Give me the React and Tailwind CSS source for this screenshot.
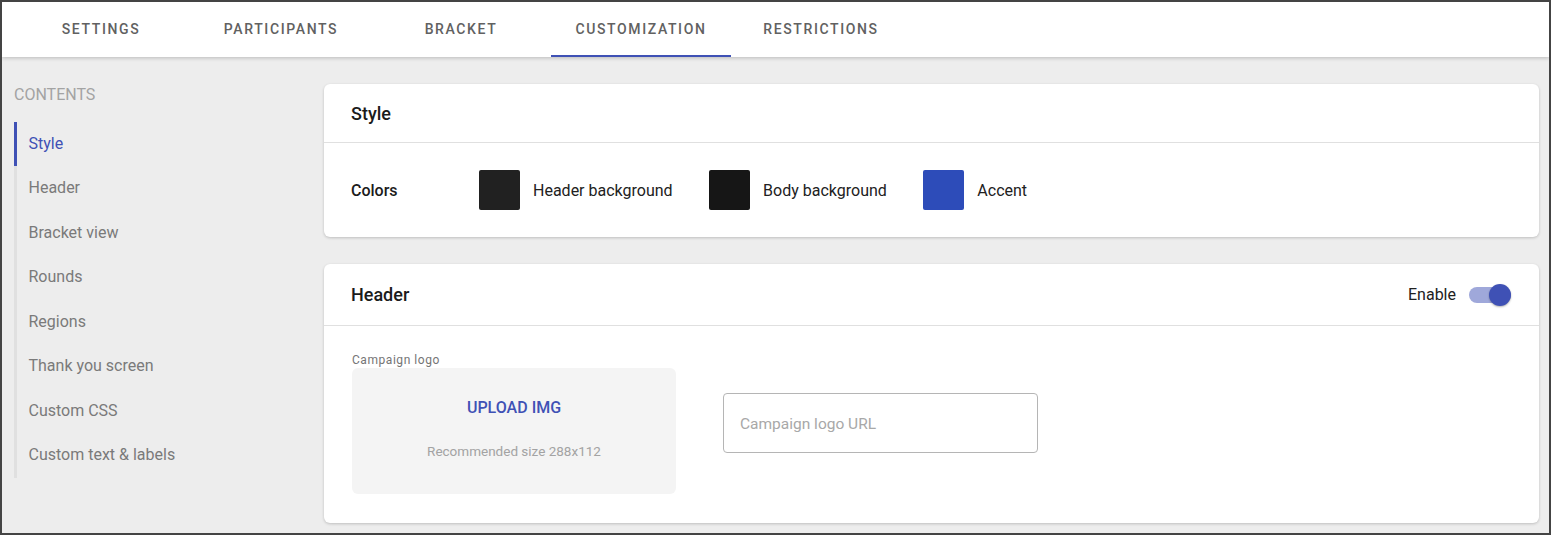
const TABS = ['SETTINGS', 'PARTICIPANTS', 'BRACKET', 'CUSTOMIZATION', 'RESTRICTIONS']
const NAV_ITEMS = ['Style', 'Header', 'Bracket view', 'Rounds', 'Regions', 'Thank you screen', 'Custom CSS', 'Custom text & labels']
const COLORS = [
  { label: 'Header background', color: 'bg-[#212121]', gap: 'mr-[36.5px]' },
  { label: 'Body background', color: 'bg-[#161616]', gap: 'mr-[36.5px]' },
  { label: 'Accent', color: 'bg-[#2d4cb9]', gap: '' },
]

function Tabs() {
  return (
    <header className="relative z-10 h-[55px] shrink-0 bg-white pl-[9px] shadow-[0_1px_4px_rgba(0,0,0,0.22)]">
      <div className="flex h-full">
        {TABS.map((tab) => (
          <div
            key={tab}
            className={[
              'flex h-full w-[180px] items-center justify-center border-b-2 pt-[2px] text-[14px] font-medium tracking-[1.62px] text-[#616161]',
              tab === 'CUSTOMIZATION' ? 'border-[#3f51b5]' : 'border-transparent',
            ].join(' ')}
          >
            {tab}
          </div>
        ))}
      </div>
    </header>
  )
}

function Sidebar() {
  return (
    <aside className="w-[322px] shrink-0 pl-[12px]">
      <div className="pt-[28px] text-[16px] leading-[20px] text-[#a3a3a3]">CONTENTS</div>
      <nav className="mt-[16.7px] flex h-[356px] flex-col border-l-[3px] border-[#e0e0e0]">
        {NAV_ITEMS.map((item) => {
          const isActive = item === 'Style'
          return (
            <div
              key={item}
              className={[
                '-ml-[3px] flex h-[44.5px] items-center border-l-[3px] pl-[11.5px] text-[16px]',
                isActive ? 'border-[#3f51b5] text-[#3f51b5]' : 'border-transparent text-[#7a7a7a]',
              ].join(' ')}
            >
              {item}
            </div>
          )
        })}
      </nav>
    </aside>
  )
}

function Card({ title, right, className, headerClass, children }) {
  return (
    <section className={`rounded-[6px] bg-white shadow-[0_1px_3px_rgba(0,0,0,0.2)] ${className}`}>
      <div className={`flex items-center justify-between border-b border-[#e0e0e0] pl-[27px] pr-[28px] ${headerClass}`}>
        <h2 className="text-[18px] font-medium text-[#1b1b1b]">{title}</h2>
        {right}
      </div>
      {children}
    </section>
  )
}

function Toggle() {
  return (
    <div className="relative h-[16px] w-[42px] rounded-full bg-[#9fa8da]">
      <div className="absolute -top-[3px] right-0 h-[22px] w-[22px] rounded-full bg-[#3f51b5] shadow-[0_1px_2px_rgba(0,0,0,0.3)]" />
    </div>
  )
}

export default function App() {
  return (
    <div className="flex h-[535px] w-[1551px] flex-col overflow-hidden border-2 border-[#444444] bg-[#ededed] font-['Roboto',sans-serif]">
      <Tabs />
      <div className="flex flex-1">
        <Sidebar />
        <main className="flex w-[1215px] flex-col gap-[27px] pt-[27px]">
          <Card title="Style" className="h-[153px]" headerClass="h-[59px]">
            <div className="flex h-[96px] items-center pl-[27px]">
              <div className="w-[128px] text-[16px] font-medium text-[#1b1b1b]">Colors</div>
              {COLORS.map((c) => (
                <div key={c.label} className={`flex items-center ${c.gap}`}>
                  <div className={`mb-[2px] h-[40px] w-[40.5px] rounded-[2px] ${c.color}`} />
                  <span className="ml-[13.5px] text-[16px] text-[#212121]">{c.label}</span>
                </div>
              ))}
            </div>
          </Card>
          <Card
            title="Header"
            className="h-[259px]"
            headerClass="h-[62px]"
            right={
              <div className="flex items-center gap-[13px]">
                <span className="text-[16px] text-[#212121]">Enable</span>
                <Toggle />
              </div>
            }
          >
            <div className="flex pl-[28px] pt-[26px]">
              <div className="w-[324px]">
                <div className="text-[12px] leading-[16px] tracking-[0.55px] text-[#757575]">Campaign logo</div>
                <div className="flex h-[126px] flex-col items-center rounded-[6px] bg-[#f4f4f4]">
                  <div className="mt-[28px] text-[16px] font-medium text-[#3f51b5]">UPLOAD IMG</div>
                  <div className="mt-[21px] text-[13.5px] text-[#a3a3a3]">Recommended size 288x112</div>
                </div>
              </div>
              <div className="ml-[47px] mt-[41px] flex h-[60px] w-[315px] items-center rounded-[4px] border border-[#b5b5b5] pl-[16px] pt-[4px] text-[15.5px] text-[#a8a8a8]">
                Campaign logo URL
              </div>
            </div>
          </Card>
        </main>
      </div>
    </div>
  )
}
